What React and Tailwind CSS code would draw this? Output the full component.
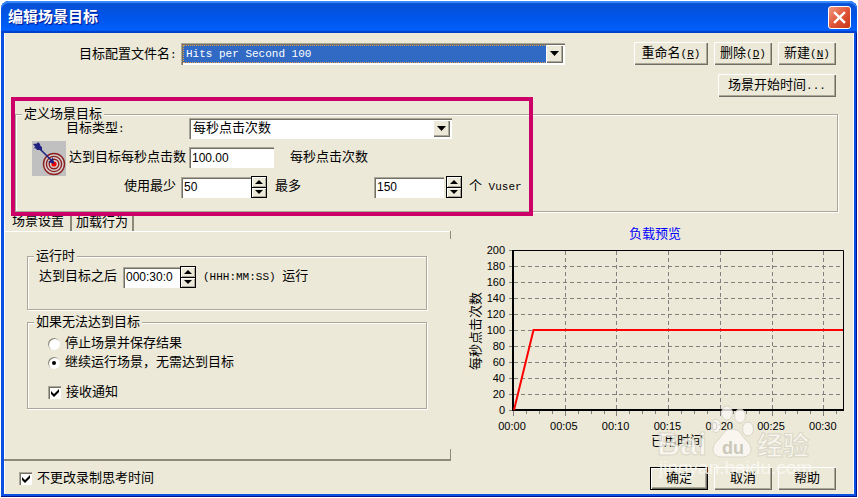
import React, { useState } from "react";

const sunken =
  "bg-white shadow-[inset_1px_1px_0_#aca899,inset_2px_2px_0_#716f64,inset_-1px_-1px_0_#fff]";

const Latin = ({ children }) => (
  <span className="text-[11px]">{children}</span>
);

const Button = ({ children, className, primary }) => (
  <button
    className={`h-[23px] whitespace-nowrap bg-[#ece9d8] text-center leading-5 ${
      primary
        ? "border border-black shadow-[inset_1px_1px_0_#fff,inset_-1px_-1px_0_#716f64,inset_-2px_-2px_0_#aca899]"
        : "shadow-[inset_1px_1px_0_#fff,inset_-1px_-1px_0_#716f64,inset_-2px_-2px_0_#aca899]"
    } ${className}`}
  >
    {children}
  </button>
);

const Group = ({ title, className, children }) => (
  <fieldset
    className={`border border-[#aca899] shadow-[inset_1px_1px_0_#fff,1px_1px_0_#fff] ${className}`}
  >
    <legend className="ml-[6px] h-2 bg-[#ece9d8] px-[2px] leading-[9px]">
      {title}
    </legend>
    {children}
  </fieldset>
);

const Combo = ({ id, options, className, selectClass }) => (
  <div className={`relative p-[2px] ${sunken} ${className}`}>
    <select
      id={id}
      className={`h-full w-full appearance-none pl-[2px] outline-none ${selectClass}`}
    >
      {options.map((option) => (
        <option key={option}>{option}</option>
      ))}
    </select>
    <span className="pointer-events-none absolute bottom-[2px] right-[2px] top-[2px] flex w-[17px] items-center justify-center bg-[#ece9d8] shadow-[inset_1px_1px_0_#fff,inset_-1px_-1px_0_#716f64,inset_-2px_-2px_0_#aca899]">
      <svg width="9" height="5" viewBox="0 0 9 5">
        <path d="M0 0h9L4.500 5z" />
      </svg>
    </span>
  </div>
);

const Spinner = ({ label }) => (
  <span className="flex h-[22px] w-4 flex-col">
    <button
      aria-label={`${label} +`}
      className="flex flex-1 items-center justify-center border border-black bg-[#ece9d8] shadow-[inset_1px_1px_0_#fff,inset_-1px_-1px_0_#aca899]"
    >
      <svg width="8" height="4" viewBox="0 0 8 4">
        <path d="M0 4h8L4 0z" />
      </svg>
    </button>
    <button
      aria-label={`${label} -`}
      className="flex flex-1 items-center justify-center border border-t-0 border-black bg-[#ece9d8] shadow-[inset_1px_1px_0_#fff,inset_-1px_-1px_0_#aca899]"
    >
      <svg width="8" height="4" viewBox="0 0 8 4">
        <path d="M0 0h8L4 4z" />
      </svg>
    </button>
  </span>
);

const TextBox = ({ id, value, className }) => (
  <input
    id={id}
    defaultValue={value}
    className={`h-[21px] pl-[3px] font-['Liberation_Sans',sans-serif] text-[12px] outline-none ${sunken} ${className}`}
  />
);

const CheckBox = ({ label, className }) => {
  const [checked, setChecked] = useState(true);
  return (
    <label className={`flex h-[19px] items-center gap-[5px] ${className}`}>
      <span className="relative flex">
        <input
          type="checkbox"
          checked={checked}
          onChange={() => setChecked(!checked)}
          className={`size-[13px] appearance-none ${sunken}`}
        />
        {checked && (
          <svg
            className="pointer-events-none absolute left-[3px] top-[3px]"
            width="8"
            height="8"
            viewBox="0 0 8 8"
          >
            <path d="M0 2l3 3 5-5v3L3 8 0 5z" />
          </svg>
        )}
      </span>
      {label}
    </label>
  );
};

const Radio = ({ label, checked, onChange }) => (
  <label className="flex h-[19px] items-center gap-[5px]">
    <span className="relative flex">
      <input
        type="radio"
        name="fallback"
        checked={checked}
        onChange={onChange}
        className="size-[12px] appearance-none rounded-full bg-white shadow-[inset_1px_1px_0_#8d8a7a]"
      />
      {checked && (
        <span className="pointer-events-none absolute left-1 top-1 size-1 rounded-full bg-black" />
      )}
    </span>
    {label}
  </label>
);

const TargetIcon = () => (
  <svg className="shrink-0" width="34" height="35" viewBox="0 0 34 35">
    <rect width="34" height="35" fill="#c0c0c0" />
    <g fill="none" stroke="#8b2020" strokeWidth="1.400">
      <circle cx="22" cy="23" r="10.500" fill="#d8d0d0" />
      <circle cx="22" cy="23" r="7.600" />
      <circle cx="22" cy="23" r="4.800" />
    </g>
    <circle cx="22" cy="23" r="2.600" fill="#f00" />
    <path d="M5 5l16 16" stroke="#202080" strokeWidth="1.600" />
    <g fill="#202080">
      <path d="M22.500 23l-6.500-2 2-1 1.500-1.500 1-2.500z" />
      <path d="M1 3l4-.5L6 1l2 2 .5 2 1.500 1v4L8 9H5L4 7.500 1.500 7l2-1z" />
    </g>
  </svg>
);

const yTicks = [200, 180, 160, 140, 120, 100, 80, 60, 40, 20, 0];
const xTicks = ["00:00", "00:05", "00:10", "00:15", "00:20", "00:25", "00:30"];
const minorTicks = Array.from({ length: 26 }, (_, i) => 49 + i * 12.93);

const LoadChart = () => (
  <svg className="block w-full" viewBox="0 0 384 224">
    <text x="191" y="12" textAnchor="middle" fontSize="13" fill="#00f">
      负载预览
    </text>
    <g stroke="#808080" strokeDasharray="4 3">
      {yTicks.slice(1, -1).map((t) => (
        <path key={t} d={`M50 ${Math.round(184 - t * 0.8) + 0.5}H380`} />
      ))}
      {xTicks.slice(1).map((t, i) => (
        <path key={t} d={`M${Math.round(100.7 + i * 51.7) + 0.5} 25V184`} />
      ))}
    </g>
    <g stroke="#808080">
      {yTicks.map((t) => (
        <path key={t} d={`M45 ${Math.round(184 - t * 0.8) + 0.5}H49`} />
      ))}
      {minorTicks.map((x, i) => (
        <path key={x} d={`M${Math.round(x) + 0.5} 185v${i % 4 ? 3 : 5}`} />
      ))}
    </g>
    <path d="M49 24.500H379.500V185" fill="none" stroke="#000" />
    <path d="M49 24V184H380" fill="none" stroke="#000" strokeWidth="2" />
    <path d="M50 184L69.500 104H379" fill="none" stroke="#f00" strokeWidth="2" />
    <g fontSize="11" fontFamily="Liberation Sans, sans-serif">
      {yTicks.map((t) => (
        <text key={t} x="41" y={188 - t * 0.8} textAnchor="end">
          {t}
        </text>
      ))}
      {xTicks.map((t, i) => (
        <text key={t} x={48 + i * 51.8} y="204" textAnchor="middle">
          {t}
        </text>
      ))}
    </g>
    <text
      x="0"
      y="0"
      transform="translate(16 105) rotate(-90)"
      textAnchor="middle"
      fontSize="13"
    >
      每秒点击次数
    </text>
    <text x="213" y="219" textAnchor="middle" fontSize="13">
      已用时间
    </text>
  </svg>
);

const Watermark = () => (
  <svg
    className="pointer-events-none absolute bottom-[10px] right-[38px] opacity-80"
    width="164"
    height="80"
    viewBox="0 0 164 80"
    fontFamily="Liberation Sans, Noto Sans CJK SC, sans-serif"
    fill="#fbfaf5"
  >
    <g stroke="#d6d3c4" strokeWidth="1">
      <ellipse cx="75" cy="9" rx="5.500" ry="7" />
      <ellipse cx="88" cy="12" rx="5.500" ry="7" />
      <ellipse cx="64" cy="22" rx="5" ry="6.500" />
      <ellipse cx="96" cy="25" rx="5.500" ry="7" />
      <path d="M80 25c8 0 9 6 14 11 8 7 6 17-4 17H70c-10 0-12-10-4-17 5-5 6-11 14-11z" />
      <text x="5" y="51" fontSize="32" fontWeight="bold">
        Bai
      </text>
      <text x="105" y="51" fontSize="26" fontWeight="bold">
        经验
      </text>
    </g>
    <text x="70" y="50" fontSize="18" fontWeight="bold" fill="#c4c1b2">
      du
    </text>
    <text x="7" y="70" fontSize="19">
      jingyan.baidu.com
    </text>
  </svg>
);

const App = () => {
  const [fallback, setFallback] = useState("continue");

  return (
    <div className="flex min-h-screen flex-col bg-white p-px font-['Liberation_Mono','Noto_Sans_CJK_SC',monospace] text-[13px] leading-4 text-black">
      <div className="flex flex-1 flex-col rounded-t-lg bg-[#0a50e0] px-[3px] pb-[3px] shadow-[inset_-1px_-1px_0_#00138c]">
        <header className="-mx-[3px] flex h-8 items-center justify-between rounded-t-lg bg-linear-to-b from-[#0a4fd0] via-[#0055ea] to-[#0062ff] pl-[7px] pr-[6px] shadow-[inset_0_2px_1px_#3a8cff,inset_0_-2px_1px_#0040c8]">
          <h1 className="pt-1 text-[15px] font-bold text-white [text-shadow:1px_1px_1px_#00138c]">
            编辑场景目标
          </h1>
          <button
            aria-label="关闭"
            className="flex size-[23px] items-center justify-center rounded-[3px] border border-white bg-linear-to-br from-[#f09a80] via-[#e0553a] to-[#c83510]"
          >
            <svg width="13" height="13" viewBox="0 0 12 12">
              <path d="M1 1l10 10M11 1L1 11" stroke="#fff" strokeWidth="2.200" />
            </svg>
          </button>
        </header>

        <main className="relative flex flex-1 flex-col bg-[#ece9d8] pt-[9px] shadow-[inset_1px_0_0_#fff,inset_-1px_0_0_#fff]">
          <div className="flex items-center pl-[75px] pr-[18px]">
            <label htmlFor="profile" className="w-[102px] whitespace-nowrap pt-[2px]">
              目标配置文件名<Latin>:</Latin>
            </label>
            <Combo
              id="profile"
              className="h-[22px] max-w-[384px] flex-1"
              selectClass="border border-dotted border-[#e0a050] bg-[#316ac5] text-[11px] text-white"
              options={["Hits per Second 100"]}
            />
            <div className="ml-auto flex gap-[6px]">
              <Button className="w-[74px]">
                重命名<Latin>(<u>R</u>)</Latin>
              </Button>
              <Button className="w-[58px]">
                删除<Latin>(<u>D</u>)</Latin>
              </Button>
              <Button className="w-[58px]">
                新建<Latin>(<u>N</u>)</Latin>
              </Button>
            </div>
          </div>
          <div className="mt-[9px] flex justify-end pr-[18px]">
            <Button className="w-[118px]">
              场景开始时间<Latin>...</Latin>
            </Button>
          </div>

          <section className="relative ml-[11px] mr-4 mt-[13px]">
            <Group title="定义场景目标" className="pb-[13px]">
              <div className="flex items-center pl-4">
                <TargetIcon />
                <div className="flex flex-col gap-2">
                  <div className="flex items-center">
                    <label htmlFor="goal" className="w-[123px]">
                      目标类型<Latin>:</Latin>
                    </label>
                    <Combo
                      id="goal"
                      className="h-[21px] w-[263px]"
                      selectClass="bg-white"
                      options={["每秒点击次数"]}
                    />
                  </div>
                  <div className="flex items-center">
                    <label htmlFor="hits" className="w-[123px] pl-[3px]">
                      达到目标每秒点击数
                    </label>
                    <TextBox id="hits" value="100.00" className="w-[85px]" />
                    <span className="pl-4">每秒点击次数</span>
                  </div>
                  <div className="flex items-center">
                    <label htmlFor="min" className="w-[115px] pl-[58px]">
                      使用最少
                    </label>
                    <TextBox id="min" value="50" className="w-[70px]" />
                    <Spinner label="最少" />
                    <label htmlFor="max" className="w-[107px] pl-2">
                      最多
                    </label>
                    <TextBox id="max" value="150" className="mr-[2px] w-[70px]" />
                    <Spinner label="最多" />
                    <span className="pl-[7px]">
                      个<Latin> Vuser</Latin>
                    </span>
                  </div>
                </div>
              </div>
            </Group>
            <div className="pointer-events-none absolute -bottom-1 -left-1 -top-[13px] z-10 w-[522px] border-4 border-[#cc0066]" />
          </section>

          <div className="flex flex-1">
            <section className="flex w-[447px] shrink-0 flex-col">
              <div className="flex h-[19px]" role="tablist">
                <button
                  role="tab"
                  aria-selected="true"
                  className="w-[68px] border-r-2 border-[#8d8a7a] pl-2 text-left"
                >
                  场景设置
                </button>
                <button
                  role="tab"
                  aria-selected="false"
                  className="w-[62px] border-r-2 border-[#8d8a7a] pl-1 pt-[2px] text-left"
                >
                  加载行为
                </button>
              </div>
              <div className="flex flex-1 border-b-2 border-[#8d8a7a]">
                <div className="flex-1 pl-[23px] pt-[21px] shadow-[inset_0_1px_0_#fff]">
                  <Group title="运行时" className="w-[400px] pb-[21px] pt-[6px]">
                    <div className="flex items-center pl-[11px]">
                      <label htmlFor="duration" className="w-[84px]">
                        达到目标之后
                      </label>
                      <TextBox
                        id="duration"
                        value="000:30:0"
                        className="w-[57px]"
                      />
                      <Spinner label="运行" />
                      <span className="pl-[7px]">
                        <Latin>(HHH:MM:SS) </Latin>运行
                      </span>
                    </div>
                  </Group>
                  <Group
                    title="如果无法达到目标"
                    className="mt-2 w-[400px] pb-[6px] pt-2"
                  >
                    <div className="pl-5">
                      <Radio
                        label="停止场景并保存结果"
                        checked={fallback === "stop"}
                        onChange={() => setFallback("stop")}
                      />
                      <Radio
                        label="继续运行场景，无需达到目标"
                        checked={fallback === "continue"}
                        onChange={() => setFallback("continue")}
                      />
                      <CheckBox label="接收通知" className="mt-[11px]" />
                    </div>
                  </Group>
                </div>
                <div className="flex w-px flex-col justify-between">
                  <span className="h-2 bg-[#8d8a7a]" />
                  <span className="h-[10px] bg-[#8d8a7a]" />
                </div>
              </div>
            </section>
            <section className="flex-1 pl-[13px] pr-[6px] pt-[14px]">
              <LoadChart />
            </section>
          </div>

          <footer className="flex items-center justify-between pb-1 pl-[15px] pr-[18px] pt-[6px]">
            <CheckBox label="不更改录制思考时间" />
            <div className="flex gap-[6px]">
              <Button primary className="w-[58px]">
                确定
              </Button>
              <Button className="w-[58px]">取消</Button>
              <Button className="w-[58px]">帮助</Button>
            </div>
          </footer>
          <Watermark />
        </main>
      </div>
    </div>
  );
};

export default App;
